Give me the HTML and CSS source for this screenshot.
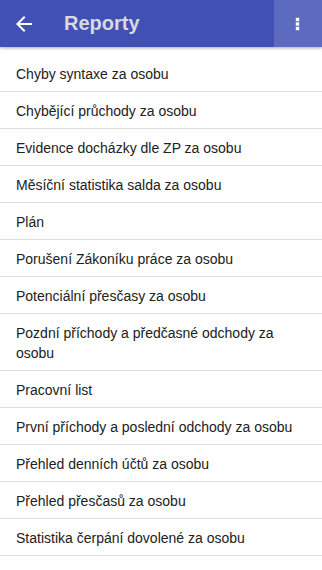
FILE: index.html
```html
<!DOCTYPE html>
<html lang="cs">
<head>
    <meta charset="UTF-8">
    <title>Reporty</title>
    <link rel="stylesheet" href="styles.css">
</head>
<body>

    <div class="toolbar">
        <button class="icon-btn back">
            <svg width="24" height="24" viewBox="0 0 24 24"><path fill="#fff" d="M20 11H7.83l5.59-5.59L12 4l-8 8 8 8 1.41-1.41L7.83 13H20v-2z"/></svg>
        </button>
        <h1>Reporty</h1>
        <button class="icon-btn more">
            <svg width="24" height="24" viewBox="0 0 24 24"><rect x="9.8" y="5.8" width="3.4" height="3.4" fill="#fff"/><rect x="9.8" y="10.3" width="3.4" height="3.4" fill="#fff"/><rect x="9.8" y="14.8" width="3.4" height="3.4" fill="#fff"/></svg>
        </button>
    </div>

    <ul class="reports">
        <li>Chyby syntaxe za osobu</li>
        <li>Chybějící průchody za osobu</li>
        <li>Evidence docházky dle ZP za osobu</li>
        <li>Měsíční statistika salda za osobu</li>
        <li>Plán</li>
        <li>Porušení Zákoníku práce za osobu</li>
        <li>Potenciální přesčasy za osobu</li>
        <li>Pozdní příchody a předčasné odchody za osobu</li>
        <li>Pracovní list</li>
        <li>První příchody a poslední odchody za osobu</li>
        <li>Přehled denních účtů za osobu</li>
        <li>Přehled přesčasů za osobu</li>
        <li>Statistika čerpání dovolené za osobu</li>
    </ul>

</body>
</html>
```

FILE: styles.css
```css
body {
    font-family: "Liberation Sans", Arial, sans-serif;
    background: #fff;
    margin: 0;
    color: #212121;
}
.toolbar {
    display: flex;
    align-items: center;
    height: 47px;
    background: #3f51b5;
    box-shadow: 0 1px 3px rgba(0,0,0,0.35);
    position: relative;
}
.icon-btn {
    width: 48px;
    height: 47px;
    border: none;
    padding: 0;
    background: transparent;
    display: flex;
    align-items: center;
    justify-content: center;
}
.more {
    background: #5c6bc0;
    margin-left: auto;
}
.toolbar h1 {
    margin: 0 0 0 16px;
    font-size: 20px;
    font-weight: bold;
    color: #d9d9de;
}
.reports {
    list-style: none;
    margin: 0;
    padding: 8px 0 0;
}
.reports li {
    font-size: 14px;
    line-height: 20px;
    padding: 9px 16px 7px;
    border-bottom: 1px solid #dcdcdc;
}
```
